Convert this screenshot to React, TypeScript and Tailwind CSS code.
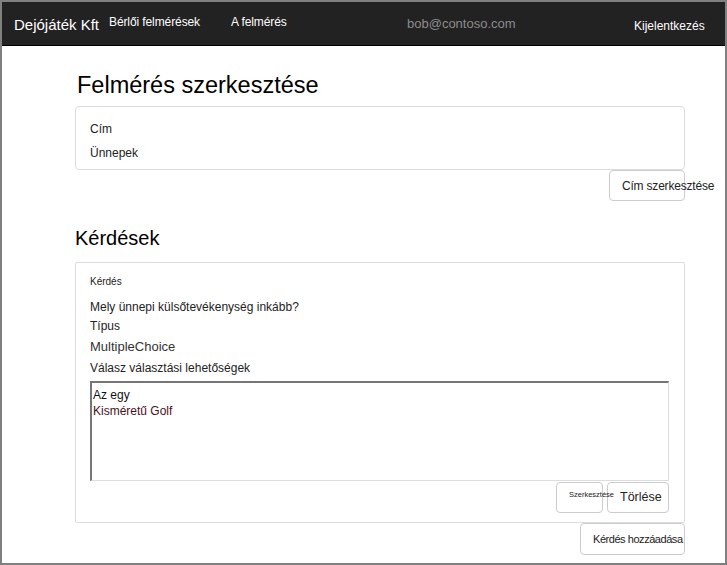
import React from "react";

const navLinks = [
  { label: "Bérlői felmérések", width: "w-[122px]" },
  { label: "A felmérés", width: "w-[176px]" },
];

const App = () => {
  return (
    <div className="w-[727px] h-[565px] overflow-hidden border-2 border-[#808080] bg-white font-['Liberation_Sans',Arial,sans-serif] text-[#222]">
      {/* top bar */}
      <nav className="h-[44px] bg-[#222] border-b border-black flex items-center pl-[12px]">
        <div className="w-[95px] text-[15px] text-white leading-none pt-[1px]">
          Dejójáték Kft
        </div>
        {navLinks.map((link) => (
          <div key={link.label} className={`${link.width} relative text-[12px] text-white leading-none -mt-[3px] tracking-[-0.1px]`}>
            {link.label}
          </div>
        ))}
        <div className="w-[227px] text-[13px] text-[#8c8c8c] leading-none">
          bob@contoso.com
        </div>
        <div className="text-[12px] text-white leading-none pt-[5px]">Kijelentkezés</div>
      </nav>

      <main className="ml-[73px] w-[610px]">
        <h1 className="mt-[26px] mb-[8px] ml-[2px] text-[23.5px] leading-[26px] text-black">
          Felmérés szerkesztése
        </h1>

        <div className="h-[64px] border border-[#ddd] rounded-[4px] px-[14px] pt-[13px] flex flex-col gap-[6px] text-[12px] leading-[18px]">
          <div>Cím</div>
          <div>Ünnepek</div>
        </div>
        <div className="flex justify-end">
          <button className="w-[76px] h-[31px] border border-[#ccc] rounded-[4px] bg-white pl-[12px] text-left text-[12px] tracking-[-0.2px] whitespace-nowrap overflow-visible text-[#222]">
            Cím szerkesztése
          </button>
        </div>

        <h2 className="mt-[24px] mb-[11px] text-[20px] leading-[26px] text-black">Kérdések</h2>

        <div className="h-[261px] border border-[#ddd] rounded-[2px] pl-[14px] pr-[15px] pt-[12px]">
          <div className="text-[10px] leading-[14px]">Kérdés</div>
          <div className="mt-[9px] text-[12px] leading-[18px]">
            Mely ünnepi külsőtevékenység inkább?
          </div>
          <div className="mt-[1px] text-[12px] leading-[18px]">Típus</div>
          <div className="mt-[2px] text-[13px] leading-[20px] text-[#333]">MultipleChoice</div>
          <div className="mt-[2px] text-[12px] leading-[18px]">Válasz választási lehetőségek</div>
          <div className="mt-[4px] h-[100px] border-t-2 border-l-2 border-r border-b border-t-[#767676] border-l-[#767676] border-r-[#ddd] border-b-[#ddd] pl-[1px] pt-[4px] text-[12px] leading-[16px]">
            <div className="text-[#111]">Az egy</div>
            <div className="text-[#4a1020]">Kisméretű Golf</div>
          </div>
          <div className="mt-[1px] flex justify-end gap-[4px]">
            <button className="w-[47px] h-[31px] border border-[#ccc] rounded-[4px] bg-white pl-[12px] pb-[6px] text-left text-[7.5px] whitespace-nowrap text-[#222] relative z-10">
              Szerkesztése
            </button>
            <button className="w-[62px] h-[31px] border border-[#ccc] rounded-[4px] bg-white pl-[12px] text-left text-[12.5px] whitespace-nowrap text-[#222]">
              Törlése
            </button>
          </div>
        </div>
        <div className="flex justify-end">
          <button className="w-[105px] h-[32px] border border-[#ccc] rounded-[4px] bg-white pl-[12px] text-left text-[11px] tracking-[-0.45px] whitespace-nowrap text-[#222]">
            Kérdés hozzáadása
          </button>
        </div>
      </main>
    </div>
  );
};

export default App;
